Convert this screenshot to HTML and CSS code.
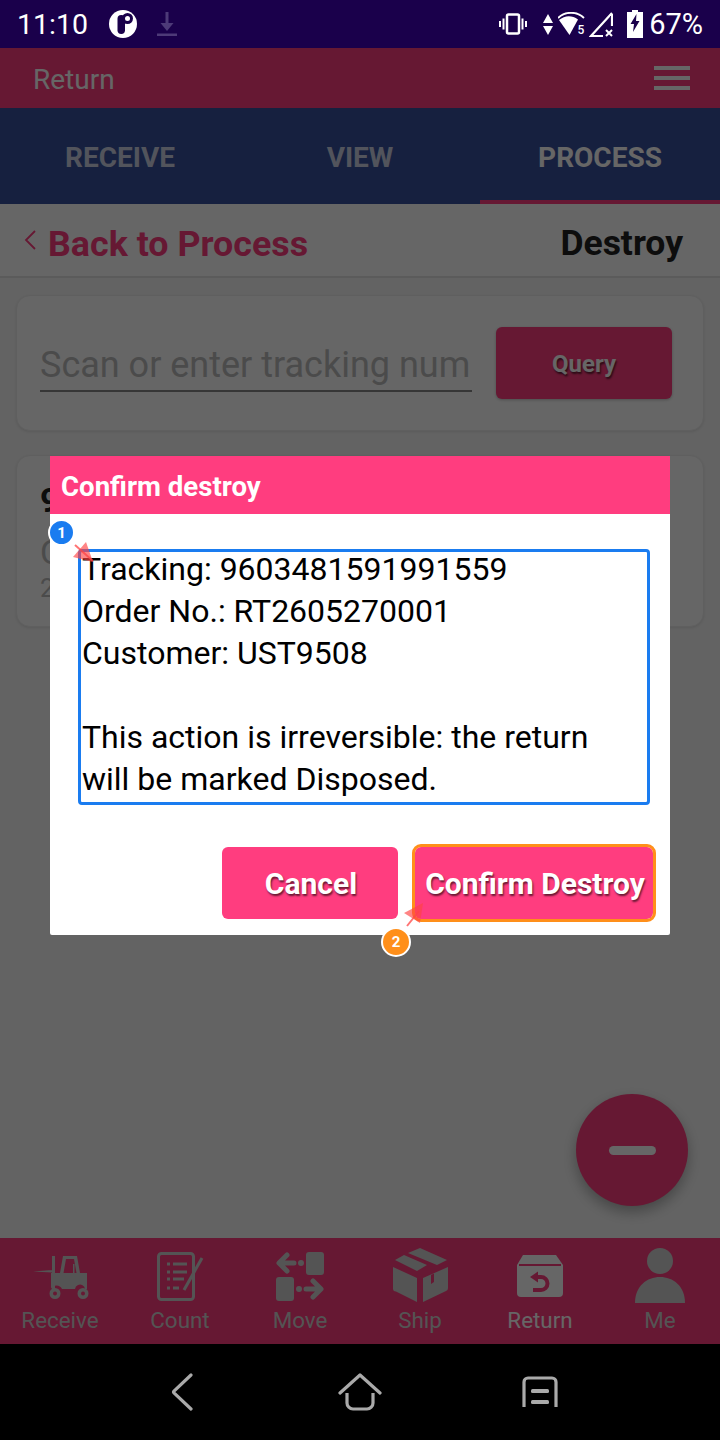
FILE: index.html
```html
<!DOCTYPE html>
<html>
    <head>
        <meta charset="utf-8">
        <title>Return</title>
        <link rel="stylesheet" href="styles.css">
    </head>
    <body>
        <div class="phone">
            <div class="statusBar">
                <span class="clock">11:10</span>
                <svg class="appDot" width="28" height="28" viewBox="0 0 28 28"><circle cx="14" cy="14" r="14" fill="#fff"/><rect x="8.500" y="5" width="7.500" height="19" rx="3.700" fill="#1a004b"/><circle cx="18.500" cy="8.500" r="5.500" fill="#1a004b"/><circle cx="18.500" cy="8.500" r="2.500" fill="#fff"/></svg>
                <svg class="dlIcon" width="20" height="24" viewBox="0 0 20 24"><path d="M8.500 0h3v11h5l-6.500 8-6.500-8h5z" fill="#4d3a78"/><rect x="0" y="21.500" width="20" height="2.500" fill="#4d3a78"/></svg>
                <div class="statusRight">
                    <svg class="vibrate" width="28" height="22" viewBox="0 0 28 22" fill="none" stroke="#fff"><rect x="8" y="1.500" width="12" height="19" rx="1.500" stroke-width="2.500"/><path d="M4.500 5.500v11M1 8v6M23.500 5.500v11M27 8v6" stroke-width="2"/></svg>
                    <svg class="sigArrows" width="10" height="21" viewBox="0 0 10 21"><path d="M5 0l5 9H0zM5 21l-5-9h10z" fill="#fff"/></svg>
                    <svg width="28" height="24" viewBox="0 0 28 24"><path d="M1 8C7 3 14 3 20 7.500L11.500 23z" fill="#fff"/><path d="M0 6C7-1 19-1 26 6" fill="none" stroke="#fff" stroke-width="1.800"/><text x="19.500" y="22" class="fiveText">5</text></svg>
                    <svg class="signal" width="24" height="25" viewBox="0 0 24 25"><path d="M23 2v12M23 1L2 24h12" fill="none" stroke="#fff" stroke-width="2.200"/><path d="M17 18l6 6M23 18l-6 6" stroke="#fff" stroke-width="2"/></svg>
                    <svg class="battery" width="16" height="28" viewBox="0 0 16 28"><path d="M5 0h6v2h5v26H0V2h5z" fill="#fff"/><path d="M9.500 4L3.500 14h3.500l-1 8 6.500-11H9z" fill="#1a004b"/></svg>
                    <span class="percent">67%</span>
                </div>
            </div>

            <div class="app">
                <div class="topBar">
                    <span class="topTitle">Return</span>
                    <div class="burger"><i></i><i></i><i></i></div>
                </div>
                <div class="tabs">
                    <div class="tab">RECEIVE</div>
                    <div class="tab">VIEW</div>
                    <div class="tab tabOn">PROCESS</div>
                </div>
                <div class="content">
                    <div class="subHead">
                        <div class="backLink">
                            <svg width="12" height="20" viewBox="0 0 12 20"><path d="M11 1L2 10l9 9" fill="none" stroke="#ff3d7f" stroke-width="1.800"/></svg>
                            <span>Back to Process</span>
                        </div>
                        <span class="subTitle">Destroy</span>
                    </div>
                    <div class="card searchCard">
                        <div class="scanInput">Scan or enter tracking num</div>
                        <div class="queryBtn">Query</div>
                    </div>
                    <div class="card resultCard">
                        <div class="resultId">9</div>
                        <div class="resultLine">O</div>
                        <div class="resultSmall">2</div>
                    </div>
                    <div class="fab"><i></i></div>
                </div>
                <div class="bottomNav">
                    <div class="navItem">
                        <svg width="120" height="64" viewBox="0 0 120 64"><path d="M33 27.500l19-1.500v2.500zM52 12h3v33h-3z"/><path fill-rule="evenodd" d="M63 12h14l3 17h7v16h-2a5 5 0 0 0-7-4 5 5 0 0 0-3 4H62a6 6 0 0 0-11 0V29h9zM66 15l-2.500 14h13L74 15zM73 20h1.500v9H73z"/><path fill-rule="evenodd" d="M55 44a5.500 5.500 0 1 1 0 11 5.500 5.500 0 0 1 0-11zm0 3.500a2 2 0 1 0 0 4 2 2 0 0 0 0-4zM83 44a5.500 5.500 0 1 1 0 11 5.500 5.500 0 0 1 0-11zm0 3.500a2 2 0 1 0 0 4 2 2 0 0 0 0-4z"/></svg>
                        <span>Receive</span>
                    </div>
                    <div class="navItem">
                        <svg width="120" height="64" viewBox="0 0 120 64"><rect x="38.500" y="9.500" width="35" height="46" rx="3" class="iconLine"/><path d="M47 20h3M53 20h14M47 28h3M53 28h14M47 35h3M53 35h11M47 44h3M53 44h6" class="iconLine"/><path d="M82 14L64 46" class="iconLine"/></svg>
                        <span>Count</span>
                    </div>
                    <div class="navItem">
                        <svg width="120" height="64" viewBox="0 0 120 64"><rect x="66" y="8" width="18" height="23" rx="3"/><rect x="36" y="33" width="18" height="24" rx="3"/><path d="M47 11l-8 8 8 8M41 19h13M73 37l8 8-8 8M79 45H66" class="iconArrow"/><circle cx="61" cy="19" r="3"/><circle cx="59" cy="45" r="3"/></svg>
                        <span>Move</span>
                    </div>
                    <div class="navItem">
                        <svg width="120" height="64" viewBox="0 0 120 64"><path d="M33 23l24 11v24L36 47.500a3 3 0 0 1-3-3zM63 34l25-11v21a3 3 0 0 1-2 3L63 58zM35 16l9-5 23 10-10 6zM48 9l12-5 27 12-10 5z"/><path d="M71 31v9l3-2v-8.500z" class="iconCut"/></svg>
                        <span>Ship</span>
                    </div>
                    <div class="navItem navOn">
                        <svg width="120" height="64" viewBox="0 0 120 64"><path d="M43 11h33l7 10v28a4 4 0 0 1-4 4H41a4 4 0 0 1-4-4V21z"/><path d="M39 21h42" class="iconCutThin"/><path d="M56 33h5a6.500 6.500 0 0 1 0 13h-8" class="iconCutLine"/><path d="M50 33l8-5.500v11z" class="iconCut"/></svg>
                        <span>Return</span>
                    </div>
                    <div class="navItem">
                        <svg width="120" height="64" viewBox="0 0 120 64"><circle cx="60" cy="17" r="13"/><path d="M35 59C35 42 47 33 60 33S85 42 85 59z"/></svg>
                        <span>Me</span>
                    </div>
                </div>

                <div class="overlay">
                    <div class="dialog">
                        <div class="dialogTitle">Confirm destroy</div>
                        <div class="dialogMsg">
                            <div>Tracking: 9603481591991559</div>
                            <div>Order No.: RT2605270001</div>
                            <div>Customer: UST9508</div>
                            <div>&nbsp;</div>
                            <div>This action is irreversible: the return will be marked Disposed.</div>
                            <div class="markBox"></div>
                            <span class="badge badgeBlue">1</span>
                            <svg class="arrowOne" width="24" height="24" viewBox="0 0 24 24"><path d="M3 4l18 16" stroke="#ff4444" stroke-opacity=".75" stroke-width="2"/><path d="M1 16L14 1l7 20z" fill="#ff4444" fill-opacity=".65"/></svg>
                        </div>
                        <div class="dialogBtns">
                            <div class="btn">Cancel</div>
                            <div class="btn btnMarked">
                                Confirm Destroy
                                <span class="badge badgeOrange">2</span>
                                <svg class="arrowTwo" width="24" height="27" viewBox="0 0 24 27"><path d="M5 25L17 10" stroke="#ff4444" stroke-opacity=".75" stroke-width="2"/><path d="M21 2L2 12l16 10z" fill="#ff4444" fill-opacity=".65"/></svg>
                            </div>
                        </div>
                    </div>
                </div>
            </div>

            <div class="sysNav">
                <div class="sysCell"><svg class="sysBack" width="24" height="38" viewBox="0 0 24 38"><path d="M21 2L4 18a1.500 1.500 0 0 0 0 2l17 16" fill="none" stroke="#aaa" stroke-width="3.200" stroke-linecap="round"/></svg></div>
                <div class="sysCell"><svg width="44" height="38" viewBox="0 0 44 38"><path d="M2 20L22 2l20 18" fill="none" stroke="#aaa" stroke-width="3.200" stroke-linecap="round" stroke-linejoin="round"/><path d="M9 20v10a6 6 0 0 0 6 6h14a6 6 0 0 0 6-6V20" fill="none" stroke="#aaa" stroke-width="3.200"/></svg></div>
                <div class="sysCell"><svg width="36" height="32" viewBox="0 0 36 32"><path d="M2 31V6a4 4 0 0 1 4-4h24a4 4 0 0 1 4 4v25" fill="none" stroke="#aaa" stroke-width="3.200"/><rect x="9" y="13" width="18" height="4" rx="1.500" fill="#aaa"/><rect x="9" y="24" width="18" height="4" rx="1.500" fill="#aaa"/></svg></div>
            </div>
        </div>
    </body>
</html>
```

FILE: styles.css
```css
body{
    margin: 0;
    background-color: black;
    font-family: Roboto, sans-serif;
}
.phone{
    width: 720px;
    height: 1440px;
    display: flex;
    flex-direction: column;
    overflow: hidden;
}

/* status bar */
.statusBar{
    height: 48px;
    flex: none;
    display: flex;
    align-items: center;
    padding: 0 17px;
    background-color: #1a004b;
    color: white;
}
.clock{
    font-size: 28.500px;
}
.appDot{
    margin-left: 21px;
}
.dlIcon{
    margin-left: 20px;
}
.statusRight{
    margin-left: auto;
    display: flex;
    align-items: center;
    gap: 5px;
}
.sigArrows{
    margin-left: 11px;
}
.signal{
    margin-left: -2px;
}
.battery{
    margin-left: 9px;
}
.percent{
    font-size: 29px;
    margin-left: 1px;
}
.fiveText{
    font: 500 12px Roboto, sans-serif;
    fill: white;
}

/* app */
.app{
    position: relative;
    height: 1296px;
    flex: none;
    display: flex;
    flex-direction: column;
}
.topBar{
    height: 60px;
    flex: none;
    display: flex;
    align-items: center;
    justify-content: space-between;
    padding: 0 30px 0 33px;
    background-color: #ff3d7f;
    color: white;
    font-size: 28px;
}
.topTitle{
    margin-top: 2px;
}
.burger{
    width: 36px;
    display: flex;
    flex-direction: column;
    gap: 6px;
}
.burger i{
    height: 4px;
    background-color: white;
}
.tabs{
    height: 96px;
    flex: none;
    display: flex;
    background-color: #37509d;
}
.tab{
    flex: 1;
    display: flex;
    align-items: center;
    justify-content: center;
    padding-top: 2px;
    font-size: 28px;
    font-weight: 700;
    color: rgba(255,255,255,0.75);
    box-sizing: border-box;
}
.tabOn{
    color: white;
    border-bottom: 4px solid #ff3d7f;
    padding-top: 6px;
}

.content{
    position: relative;
    flex: 1;
    display: flex;
    flex-direction: column;
    background-color: #f8f8f8;
}
.subHead{
    height: 74px;
    flex: none;
    box-sizing: border-box;
    display: flex;
    align-items: center;
    justify-content: space-between;
    padding: 5px 37px 0 24px;
    background-color: white;
    border-bottom: 2px solid #e4e4e4;
}
.backLink{
    display: flex;
    align-items: center;
    gap: 12px;
    color: #ff3d7f;
    font-size: 35.800px;
    font-weight: 700;
}
.backLink span{
    margin-top: 2px;
}
.backLink svg{
    margin-top: -5px;
}
.subTitle{
    font-size: 35.500px;
    font-weight: 700;
    color: #222;
}
.card{
    margin: 0 16px;
    box-sizing: border-box;
    background-color: white;
    border: 1px solid #eeeeee;
    border-radius: 14px;
}
.searchCard{
    height: 136px;
    margin-top: 17px;
    display: flex;
    align-items: center;
    padding: 0 31px 0 23px;
    box-shadow: 0 1px 3px rgba(0,0,0,0.1);
}
.scanInput{
    width: 432px;
    height: 54px;
    box-sizing: border-box;
    overflow: hidden;
    white-space: nowrap;
    margin-top: 4px;
    font-size: 36px;
    line-height: 54px;
    color: #bbb;
    border-bottom: 2px solid #888;
}
.queryBtn{
    width: 176px;
    height: 72px;
    box-sizing: border-box;
    padding-top: 2px;
    margin-left: auto;
    display: flex;
    align-items: center;
    justify-content: center;
    background-color: #ff3d7f;
    border-radius: 6px;
    color: white;
    font-size: 24px;
    font-weight: 700;
    text-shadow: 1px 2px 2px rgba(0,0,0,0.6);
    box-shadow: 0 1px 3px rgba(0,0,0,0.25);
}
.resultCard{
    height: 172px;
    margin-top: 24px;
    padding: 24px 23px 0;
    box-shadow: 0 1px 3px rgba(0,0,0,0.1);
}
.resultId{
    font-size: 34px;
    font-weight: 700;
    line-height: 40px;
    color: #222;
}
.resultLine{
    margin-top: 12px;
    font-size: 34px;
    line-height: 40px;
    color: #bbb;
}
.resultSmall{
    font-size: 26px;
    line-height: 32px;
    color: #bbb;
}
.fab{
    position: absolute;
    right: 32px;
    bottom: 32px;
    width: 112px;
    height: 112px;
    border-radius: 50%;
    display: flex;
    align-items: center;
    justify-content: center;
    background-color: #ff3d7f;
    box-shadow: 0 6px 14px rgba(0,0,0,0.3);
}
.fab i{
    width: 47px;
    height: 9px;
    border-radius: 5px;
    background-color: white;
}

.bottomNav{
    height: 106px;
    flex: none;
    display: flex;
    background-color: #ff3d7f;
}
.navItem{
    flex: 1;
    display: flex;
    flex-direction: column;
    align-items: center;
    padding-top: 6px;
    font-size: 22.400px;
    color: #d2d2d2;
    fill: #d2d2d2;
}
.navItem svg{
    display: block;
}
.navItem span{
    line-height: 24px;
}
.navOn{
    color: white;
    fill: white;
}
.iconLine{
    fill: none;
    stroke: #d2d2d2;
    stroke-width: 3px;
}
.iconArrow{
    fill: none;
    stroke: #d2d2d2;
    stroke-width: 5px;
    stroke-linecap: round;
    stroke-linejoin: round;
}
.iconCut{
    fill: #ff3d7f;
}
.iconCutLine{
    fill: none;
    stroke: #ff3d7f;
    stroke-width: 4px;
}
.iconCutThin{
    fill: none;
    stroke: #ff3d7f;
    stroke-width: 2px;
}

/* dialog */
.overlay{
    position: absolute;
    top: 0;
    left: 0;
    right: 0;
    bottom: 0;
    padding-bottom: 1px;
    display: flex;
    align-items: center;
    justify-content: center;
    background-color: rgba(0,0,0,0.6);
}
.dialog{
    width: 620px;
    height: 479px;
    box-sizing: border-box;
    background-color: white;
    border-radius: 2px;
    display: flex;
    flex-direction: column;
}
.dialogTitle{
    height: 58px;
    flex: none;
    box-sizing: border-box;
    display: flex;
    align-items: center;
    padding: 2px 0 0 11px;
    background-color: #ff3d7f;
    color: white;
    font-size: 27.600px;
    font-weight: 700;
}
.dialogMsg{
    position: relative;
    margin: 34px 40px 0 32px;
    font-size: 32px;
    line-height: 42px;
    color: black;
}
.markBox{
    position: absolute;
    top: 1px;
    left: -4px;
    right: -20px;
    bottom: -5px;
    border: 3px solid #1a7cf0;
    border-radius: 4px;
}
.badge{
    position: absolute;
    width: 27px;
    height: 27px;
    box-sizing: border-box;
    border: 2px solid white;
    border-radius: 50%;
    display: flex;
    align-items: center;
    justify-content: center;
    color: white;
    font-size: 15px;
    font-weight: 700;
}
.badgeBlue{
    top: -29px;
    left: -34px;
    background-color: #1a7cf0;
}
.badgeOrange{
    left: -34px;
    bottom: -38px;
    width: 30px;
    height: 30px;
    padding: 0;
    background-color: #ff8f1a;
    text-shadow: none;
}
.arrowOne{
    position: absolute;
    top: -7px;
    left: -10px;
}
.arrowTwo{
    position: absolute;
    left: -13px;
    top: 54px;
}
.dialogBtns{
    margin-top: auto;
    padding: 0 17px 16px 0;
    display: flex;
    justify-content: flex-end;
    gap: 17px;
}
.btn{
    position: relative;
    width: 176px;
    height: 72px;
    box-sizing: border-box;
    padding-left: 2px;
    display: flex;
    align-items: center;
    justify-content: center;
    background-color: #ff3d7f;
    border-radius: 6px;
    color: white;
    font-size: 30px;
    font-weight: 700;
    white-space: nowrap;
    text-shadow: 1px 2px 2px rgba(0,0,0,0.6);
}
.btnMarked{
    width: 238px;
    outline: 3px solid #ff8f1a;
    outline-offset: 0;
}

/* android nav */
.sysNav{
    height: 96px;
    flex: none;
    display: flex;
    justify-content: center;
    background-color: black;
}
.sysCell{
    width: 180px;
    display: flex;
    align-items: center;
    justify-content: center;
}
.sysBack{
    margin-left: 3px;
}
```
